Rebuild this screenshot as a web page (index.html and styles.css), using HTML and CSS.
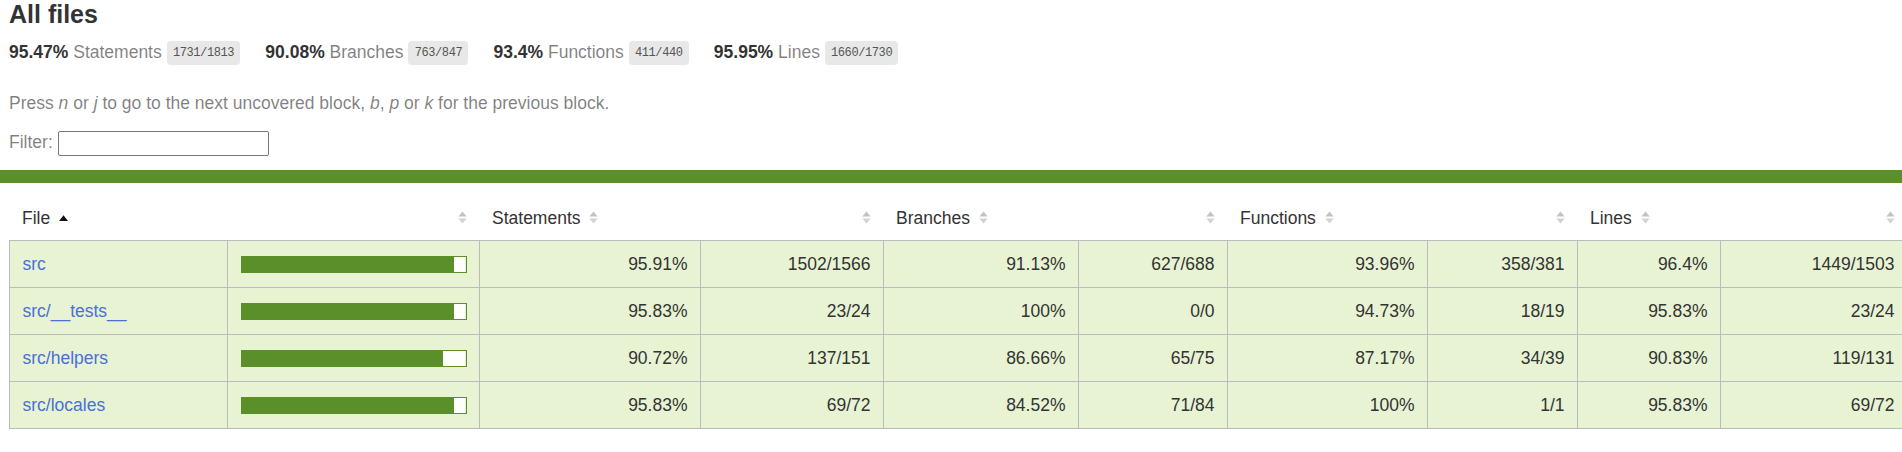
FILE: index.html
```html
<!doctype html>
<html lang="en">
<head>
<meta charset="utf-8">
<title>Code coverage report for All files</title>
<link rel="stylesheet" href="styles.css">
</head>
<body>
<div class="wrapper">
  <div class="summary">
    <h1 class="title">All files</h1>
    <div class="stats">
      <div class="stat"><span class="strong">95.47% </span><span class="quiet">Statements</span> <span class="fraction">1731/1813</span></div>
      <div class="stat"><span class="strong">90.08% </span><span class="quiet">Branches</span> <span class="fraction">763/847</span></div>
      <div class="stat"><span class="strong">93.4% </span><span class="quiet">Functions</span> <span class="fraction">411/440</span></div>
      <div class="stat"><span class="strong">95.95% </span><span class="quiet">Lines</span> <span class="fraction">1660/1730</span></div>
    </div>
    <p class="quiet hint">Press <em>n</em> or <em>j</em> to go to the next uncovered block, <em>b</em>, <em>p</em> or <em>k</em> for the previous block.</p>
    <div class="quiet filter">Filter: <input type="search" class="search" aria-label="Filter"></div>
  </div>
  <div class="status-line"></div>
  <div class="table-wrap">
    <table class="coverage-summary">
      <colgroup>
        <col class="c-file"><col class="c-pic">
        <col class="c-spct"><col class="c-sabs">
        <col class="c-bpct"><col class="c-babs">
        <col class="c-fpct"><col class="c-fabs">
        <col class="c-lpct"><col>
      </colgroup>
      <thead>
        <tr>
          <th class="file">File<svg class="sorter" width="9" height="13" viewBox="0 0 9 13"><path d="M4.5 4.2L9 10H0z" fill="#111"/></svg></th>
          <th class="pic"><svg class="sorter" width="9" height="13" viewBox="0 0 9 13"><path d="M4.5 0.4L8.6 5.4H0.4z" fill="#c3c3c3"/><path d="M4.5 12.6L8.6 7.6H0.4z" fill="#d2d2d2"/></svg></th>
          <th class="pct">Statements<svg class="sorter" width="9" height="13" viewBox="0 0 9 13"><path d="M4.5 0.4L8.6 5.4H0.4z" fill="#c3c3c3"/><path d="M4.5 12.6L8.6 7.6H0.4z" fill="#d2d2d2"/></svg></th>
          <th class="abs"><svg class="sorter" width="9" height="13" viewBox="0 0 9 13"><path d="M4.5 0.4L8.6 5.4H0.4z" fill="#c3c3c3"/><path d="M4.5 12.6L8.6 7.6H0.4z" fill="#d2d2d2"/></svg></th>
          <th class="pct">Branches<svg class="sorter" width="9" height="13" viewBox="0 0 9 13"><path d="M4.5 0.4L8.6 5.4H0.4z" fill="#c3c3c3"/><path d="M4.5 12.6L8.6 7.6H0.4z" fill="#d2d2d2"/></svg></th>
          <th class="abs"><svg class="sorter" width="9" height="13" viewBox="0 0 9 13"><path d="M4.5 0.4L8.6 5.4H0.4z" fill="#c3c3c3"/><path d="M4.5 12.6L8.6 7.6H0.4z" fill="#d2d2d2"/></svg></th>
          <th class="pct">Functions<svg class="sorter" width="9" height="13" viewBox="0 0 9 13"><path d="M4.5 0.4L8.6 5.4H0.4z" fill="#c3c3c3"/><path d="M4.5 12.6L8.6 7.6H0.4z" fill="#d2d2d2"/></svg></th>
          <th class="abs"><svg class="sorter" width="9" height="13" viewBox="0 0 9 13"><path d="M4.5 0.4L8.6 5.4H0.4z" fill="#c3c3c3"/><path d="M4.5 12.6L8.6 7.6H0.4z" fill="#d2d2d2"/></svg></th>
          <th class="pct">Lines<svg class="sorter" width="9" height="13" viewBox="0 0 9 13"><path d="M4.5 0.4L8.6 5.4H0.4z" fill="#c3c3c3"/><path d="M4.5 12.6L8.6 7.6H0.4z" fill="#d2d2d2"/></svg></th>
          <th class="abs"><svg class="sorter" width="9" height="13" viewBox="0 0 9 13"><path d="M4.5 0.4L8.6 5.4H0.4z" fill="#c3c3c3"/><path d="M4.5 12.6L8.6 7.6H0.4z" fill="#d2d2d2"/></svg></th>
        </tr>
      </thead>
      <tbody>
        <tr class="high">
          <td class="file"><a href="#">src</a></td>
          <td class="pic"><div class="chart"><div class="cover-fill" style="width: 95%"></div><div class="cover-empty" style="width: 5%"></div></div></td>
          <td class="pct">95.91%</td><td class="abs">1502/1566</td>
          <td class="pct">91.13%</td><td class="abs">627/688</td>
          <td class="pct">93.96%</td><td class="abs">358/381</td>
          <td class="pct">96.4%</td><td class="abs">1449/1503</td>
        </tr>
        <tr class="high">
          <td class="file"><a href="#">src/__tests__</a></td>
          <td class="pic"><div class="chart"><div class="cover-fill" style="width: 95%"></div><div class="cover-empty" style="width: 5%"></div></div></td>
          <td class="pct">95.83%</td><td class="abs">23/24</td>
          <td class="pct">100%</td><td class="abs">0/0</td>
          <td class="pct">94.73%</td><td class="abs">18/19</td>
          <td class="pct">95.83%</td><td class="abs">23/24</td>
        </tr>
        <tr class="high">
          <td class="file"><a href="#">src/helpers</a></td>
          <td class="pic"><div class="chart"><div class="cover-fill" style="width: 90%"></div><div class="cover-empty" style="width: 10%"></div></div></td>
          <td class="pct">90.72%</td><td class="abs">137/151</td>
          <td class="pct">86.66%</td><td class="abs">65/75</td>
          <td class="pct">87.17%</td><td class="abs">34/39</td>
          <td class="pct">90.83%</td><td class="abs">119/131</td>
        </tr>
        <tr class="high">
          <td class="file"><a href="#">src/locales</a></td>
          <td class="pic"><div class="chart"><div class="cover-fill" style="width: 95%"></div><div class="cover-empty" style="width: 5%"></div></div></td>
          <td class="pct">95.83%</td><td class="abs">69/72</td>
          <td class="pct">84.52%</td><td class="abs">71/84</td>
          <td class="pct">100%</td><td class="abs">1/1</td>
          <td class="pct">95.83%</td><td class="abs">69/72</td>
        </tr>
      </tbody>
    </table>
  </div>
</div>
</body>
</html>
```

FILE: styles.css
```css
*, *::before, *::after { box-sizing: border-box; }

html, body { margin: 0; padding: 0; }
html { overflow: hidden; }

body {
  font-family: "Liberation Sans", Arial, Helvetica, sans-serif;
  font-size: 17.5px;
  color: #333;
  background: #fff;
}

.summary { padding: 0 12.5px 14px 9px; }

.title {
  margin: 0;
  font-size: 25px;
  font-weight: bold;
}

.stats { display: flex; }
.stat { padding: 12.5px 25px 12.5px 0; }

.strong { font-weight: bold; }
.quiet { color: rgba(0, 0, 0, 0.5); }

.fraction {
  font-family: "Liberation Mono", "DejaVu Sans Mono", monospace;
  font-size: 12px;
  letter-spacing: -0.4px;
  color: #555;
  background: #e8e8e8;
  padding: 5px 6.25px;
  border-radius: 3.75px;
  vertical-align: middle;
}

.hint { margin: 17.5px 0; }

.search {
  width: 211px;
  height: 25px;
  margin: 0;
  padding: 1px 2px;
  border: 1px solid #767676;
  border-radius: 2px;
  background: #fff;
  vertical-align: baseline;
}

.status-line {
  height: 12.5px;
  background: #5a8f29;
}

.table-wrap {
  padding: 12.5px 0 12.5px 9px;
  margin-right: -6px;
}

.coverage-summary {
  width: 100%;
  border-collapse: collapse;
  table-layout: fixed;
}

.c-file { width: 218px; }
.c-pic { width: 252px; }
.c-spct { width: 221px; }
.c-sabs { width: 183px; }
.c-bpct { width: 195px; }
.c-babs { width: 149px; }
.c-fpct { width: 200px; }
.c-fabs { width: 150px; }
.c-lpct { width: 143px; }

.coverage-summary tr { border-bottom: 1px solid #bbb; }
.coverage-summary tbody { border: 1px solid #bbb; }

.coverage-summary th,
.coverage-summary td { padding: 12.5px; }

.coverage-summary th {
  text-align: left;
  font-weight: normal;
  white-space: nowrap;
  line-height: 20px;
}

.coverage-summary td {
  line-height: 21px;
  border-right: 1px solid #bbb;
}
.coverage-summary td:last-child { border-right: none; }

.coverage-summary th.pic,
.coverage-summary th.abs,
.coverage-summary td.pct,
.coverage-summary td.abs { text-align: right; }

.coverage-summary td.file { white-space: nowrap; }

.coverage-summary a {
  color: #4a70d6;
  text-decoration: none;
}

.sorter {
  display: inline-block;
  margin-left: 8.75px;
  vertical-align: baseline;
}
.pic .sorter,
.abs .sorter { margin-left: 0; }

.high { background: #e7f3d3; }

.chart {
  line-height: 0;
  border: 1px solid #5a8f29;
  display: flex;
}

.cover-fill,
.cover-empty {
  height: 15px;
}
.cover-fill { background: #5a8f29; }
.cover-empty { background: #fff; }
```
